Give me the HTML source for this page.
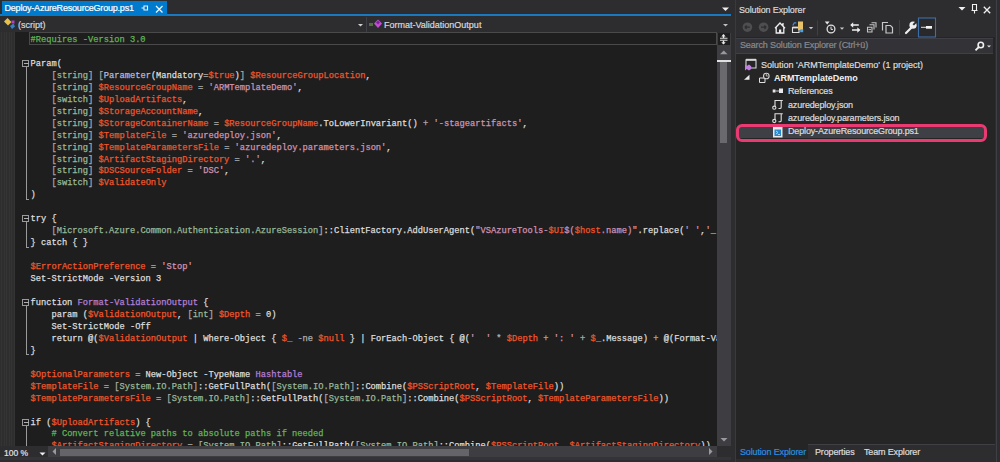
<!DOCTYPE html>
<html><head><meta charset="utf-8">
<style>
*{margin:0;padding:0;box-sizing:border-box}
html,body{width:1000px;height:462px;overflow:hidden;background:#2d2d30;font-family:"Liberation Sans",sans-serif}
.a{position:absolute}
svg{position:absolute;overflow:visible}
#tab{left:2px;top:1px;width:165px;height:15px;background:#007acc;color:#fff;font-size:9px;letter-spacing:-0.2px;-webkit-text-stroke:0.2px;line-height:15px;padding-left:2.5px;white-space:nowrap}
#blueline{left:0;top:14px;width:731px;height:2px;background:#1a78c0}
#nav{left:0;top:16px;width:731px;height:16px;background:#2d2d30}
#editor{left:0;top:32px;width:717px;height:414px;background:#1e1e1e;overflow:hidden}
#margin{left:0;top:0;width:15px;height:414px;background:repeating-linear-gradient(90deg,#2e2e2e 0,#2e2e2e 1.2px,#343434 1.2px,#343434 2.5px)}
pre{position:absolute;left:30.5px;top:3px;font-family:"Liberation Mono",monospace;font-size:8.72px;-webkit-text-stroke:0.25px;line-height:11.96px;color:#dcdcdc;white-space:pre}
.c{color:#60b455}.v{color:#f0552a}.s{color:#d092b2}.t{color:#98b898}.b{color:#a8a8a8}.f{color:#b47ed6}.o{color:#b0b0b0}.at{color:#b8b8d8}
#curline{left:29px;top:0px;width:688px;height:13px;border:1px solid #4a4a4a}
#vscroll{left:717px;top:33px;width:14px;height:413px;background:#3e3e42}
#hbar{left:0;top:446px;width:731px;height:16px;background:#2d2d30}
#se{left:736px;top:0;width:259px;height:462px;background:#252526}
.ui{font-size:9px;color:#d0d0d0;white-space:nowrap;line-height:11px;-webkit-text-stroke:0.2px}
.row{position:absolute;font-size:9px;color:#dcdcdc;white-space:nowrap;line-height:13.3px;letter-spacing:-0.15px;-webkit-text-stroke:0.2px}
.ol{position:absolute;left:22px;width:7px;height:7px;border:1px solid #9a9a9a}
.ol:after{content:"";position:absolute;left:1px;top:2px;width:5px;height:1px;background:#b0b0b0}
.vl{position:absolute;left:26px;width:1px;background:#9a9a9a}
.hl{position:absolute;left:26px;width:3px;height:1px;background:#9a9a9a}
</style></head><body>
<!-- top tab strip -->
<div id="nav" class="a"></div>
<div id="blueline" class="a"></div>
<div id="tab" class="a">Deploy-AzureResourceGroup.ps1</div>
<svg style="left:141px;top:4px" width="8" height="8" viewBox="0 0 8 8"><path d="M0.5 4h2.5M3 1.5v5M3 2h3.5v4H3" stroke="#e8f4ff" stroke-width="1.1" fill="none"/></svg>
<svg style="left:155px;top:4.5px" width="8" height="8" viewBox="0 0 8 8"><path d="M1 1l6.5 6.5M7.5 1L1 7.5" stroke="#e8f4ff" stroke-width="1.3"/></svg>
<svg style="left:721px;top:6px" width="9" height="6"><path d="M1 1.5h7L4.5 5z" fill="#f0f0f0"/></svg>

<!-- nav bar -->
<svg style="left:3px;top:17px" width="14" height="14" viewBox="0 0 14 14">
  <path d="M1 4.5L4.5 1L8.5 5L5 8.5z" fill="#e8c048"/>
  <path d="M8.5 3.5l3 0l0 3l-3 0z" fill="#b040c0"/>
  <path d="M7 9l3.5-2.5l1.5 3l-3 2.5z" fill="#3a80c0"/>
</svg>
<div class="a ui" style="left:18px;top:19.5px;color:#d8d8d8">(script)</div>
<svg style="left:357px;top:23px" width="8" height="5"><path d="M1 1h5L3.5 3.5z" fill="#d0d0d0"/></svg>
<div class="a" style="left:366px;top:17px;width:1px;height:15px;background:#3f3f46"></div>
<svg style="left:368px;top:17px" width="16" height="14" viewBox="0 0 16 14">
  <path d="M1 6h4v3H1z" fill="#507040"/>
  <path d="M6 6.5L10 2.5L14 6.5L10 11z" fill="#c050d0"/>
  <path d="M8 5.5L10 3.5L12 5.5L10 7.5z" fill="#8020a0"/>
</svg>
<div class="a ui" style="left:384px;top:19.5px;color:#d8d8d8">Format-ValidationOutput</div>
<svg style="left:722px;top:23px" width="8" height="5"><path d="M1 1h5L3.5 3.5z" fill="#c0c0c0"/></svg>

<!-- editor -->
<div id="editor" class="a">
<div id="margin" class="a"></div>
<div id="curline" class="a"></div>
<div class="ol" style="top:28px"></div><div class="vl" style="top:35px;height:132px"></div><div class="hl" style="top:167px"></div>
<div class="ol" style="top:183px"></div><div class="vl" style="top:190px;height:25px"></div><div class="hl" style="top:215px"></div>
<div class="ol" style="top:267px"></div><div class="vl" style="top:274px;height:48px"></div><div class="hl" style="top:322px"></div>
<div class="ol" style="top:387px"></div><div class="vl" style="top:394px;height:20px"></div>
<pre><span class="c">#Requires -Version 3.0</span>

Param(
    <span class="b">[</span><span class="t">string</span><span class="b">]</span> <span class="b">[</span><span class="at">Parameter</span>(Mandatory<span class="o">=</span><span class="v">$true</span>)<span class="b">]</span> <span class="v">$ResourceGroupLocation</span>,
    <span class="b">[</span><span class="t">string</span><span class="b">]</span> <span class="v">$ResourceGroupName</span> <span class="o">=</span> <span class="s">'ARMTemplateDemo'</span>,
    <span class="b">[</span><span class="t">switch</span><span class="b">]</span> <span class="v">$UploadArtifacts</span>,
    <span class="b">[</span><span class="t">string</span><span class="b">]</span> <span class="v">$StorageAccountName</span>,
    <span class="b">[</span><span class="t">string</span><span class="b">]</span> <span class="v">$StorageContainerName</span> <span class="o">=</span> <span class="v">$ResourceGroupName</span>.ToLowerInvariant() <span class="o">+</span> <span class="s">'-stageartifacts'</span>,
    <span class="b">[</span><span class="t">string</span><span class="b">]</span> <span class="v">$TemplateFile</span> <span class="o">=</span> <span class="s">'azuredeploy.json'</span>,
    <span class="b">[</span><span class="t">string</span><span class="b">]</span> <span class="v">$TemplateParametersFile</span> <span class="o">=</span> <span class="s">'azuredeploy.parameters.json'</span>,
    <span class="b">[</span><span class="t">string</span><span class="b">]</span> <span class="v">$ArtifactStagingDirectory</span> <span class="o">=</span> <span class="s">'.'</span>,
    <span class="b">[</span><span class="t">string</span><span class="b">]</span> <span class="v">$DSCSourceFolder</span> <span class="o">=</span> <span class="s">'DSC'</span>,
    <span class="b">[</span><span class="t">switch</span><span class="b">]</span> <span class="v">$ValidateOnly</span>
)

try {
    <span class="b">[</span><span class="t">Microsoft.Azure.Common.Authentication.AzureSession</span><span class="b">]</span>::ClientFactory.AddUserAgent(<span class="s">"VSAzureTools-</span><span class="v">$UI</span><span class="s">$(</span><span class="v">$host</span><span class="s">.name)"</span>.replace(<span class="s">' '</span>,<span class="s">'_'</span>), <span class="s">'1.0'</span>)
} catch { }

<span class="v">$ErrorActionPreference</span> <span class="o">=</span> <span class="s">'Stop'</span>
Set-StrictMode -Version 3

function <span class="f">Format-ValidationOutput</span> {
    param (<span class="v">$ValidationOutput</span>, <span class="b">[</span><span class="t">int</span><span class="b">]</span> <span class="v">$Depth</span> <span class="o">=</span> 0)
    Set-StrictMode -Off
    return @(<span class="v">$ValidationOutput</span> | Where-Object { <span class="v">$_</span> <span class="o">-ne</span> <span class="v">$null</span> } | ForEach-Object { @(<span class="s">'  '</span> <span class="o">*</span> <span class="v">$Depth</span> <span class="o">+</span> <span class="s">': '</span> <span class="o">+</span> <span class="v">$_</span>.Message) <span class="o">+</span> @(Format-ValidationOutput @(<span class="v">$_</span> | Select-Object -ExpandProperty Details) (<span class="v">$Depth</span> <span class="o">+</span> 1)) })
}

<span class="v">$OptionalParameters</span> <span class="o">=</span> New-Object -TypeName <span class="f">Hashtable</span>
<span class="v">$TemplateFile</span> <span class="o">=</span> <span class="b">[</span><span class="t">System.IO.Path</span><span class="b">]</span>::GetFullPath(<span class="b">[</span><span class="t">System.IO.Path</span><span class="b">]</span>::Combine(<span class="v">$PSScriptRoot</span>, <span class="v">$TemplateFile</span>))
<span class="v">$TemplateParametersFile</span> <span class="o">=</span> <span class="b">[</span><span class="t">System.IO.Path</span><span class="b">]</span>::GetFullPath(<span class="b">[</span><span class="t">System.IO.Path</span><span class="b">]</span>::Combine(<span class="v">$PSScriptRoot</span>, <span class="v">$TemplateParametersFile</span>))

if (<span class="v">$UploadArtifacts</span>) {
    <span class="c"># Convert relative paths to absolute paths if needed</span>
    <span class="v">$ArtifactStagingDirectory</span> <span class="o">=</span> <span class="b">[</span><span class="t">System.IO.Path</span><span class="b">]</span>::GetFullPath(<span class="b">[</span><span class="t">System.IO.Path</span><span class="b">]</span>::Combine(<span class="v">$PSScriptRoot</span>, <span class="v">$ArtifactStagingDirectory</span>))
</pre>
</div>

<!-- vertical scrollbar -->
<div id="vscroll" class="a">
  <div class="a" style="left:1px;top:0;width:12px;height:12px;background:#1e1e1e"></div>
  <svg style="left:0;top:0" width="14" height="30" viewBox="0 0 14 30">
    <path d="M6.5 1.5v3.5M6.5 7.5v3.5" stroke="#e8e8e8" stroke-width="1.4" fill="none"/>
    <path d="M4.3 3.5L6.5 1.2L8.7 3.5zM4.3 9.2L6.5 11.5L8.7 9.2z" fill="#e8e8e8"/>
    <path d="M3 5.3h7.5M3 7.3h7.5" stroke="#d8d8d8" stroke-width="1.1" fill="none"/>
    <path d="M3 21.3h7.5L6.8 17.5z" fill="#9a9a9e"/>
  </svg>
  <div class="a" style="left:0;top:27px;width:14px;height:1.5px;background:#e0e0e0"></div>
  <div class="a" style="left:3px;top:29px;width:7px;height:81px;background:#6a6a6e"></div>
  <svg style="left:0;top:400px" width="14" height="13"><path d="M3.5 5h7L7 8.5z" fill="#9a9a9e"/></svg>
</div>

<!-- bottom bar -->
<div id="hbar" class="a">
  <div class="a ui" style="left:4px;top:2px;color:#e0e0e0;font-size:8.5px">100 %</div>
  <svg style="left:38px;top:4px" width="10" height="8"><path d="M1.5 2.5h6L4.5 5.5z" fill="#f0f0f0"/></svg>
  <div class="a" style="left:48px;top:0;width:669px;height:10.5px;background:#3e3e42"></div>
  <svg style="left:48px;top:0" width="12" height="12"><path d="M8 2v7L4.5 5.5z" fill="#9a9a9e"/></svg>
  <div class="a" style="left:60px;top:2.8px;width:409px;height:6.8px;background:#656569"></div>
  <svg style="left:705px;top:0" width="12" height="12"><path d="M4 2v7l3.5-3.5z" fill="#9a9a9e"/></svg>
  <div class="a" style="left:0;top:10.5px;width:731px;height:3.5px;background:#343438"></div>
</div>

<!-- solution explorer -->
<div id="se" class="a">
  <div class="a" style="left:0;top:0;width:259px;height:17px;background:#2d2d30"></div>
  <div class="a ui" style="left:3px;top:4.7px;color:#d8d8d8;letter-spacing:-0.13px">Solution Explorer</div>
  <svg style="left:222px;top:6px" width="8" height="5"><path d="M0.5 1h7L4 4.5z" fill="#f0f0f0"/></svg>
  <svg style="left:235px;top:4px" width="7" height="10" viewBox="0 0 7 10"><path d="M1.5 0.5h4v6h-4zM0.5 6.5h6M3.5 6.5v3" stroke="#f0f0f0" stroke-width="1.1" fill="none"/></svg>
  <svg style="left:247px;top:5.5px" width="8" height="8"><path d="M0.8 0.8l6.4 6.4M7.2 0.8L0.8 7.2" stroke="#f0f0f0" stroke-width="1.3"/></svg>
  <!-- toolbar -->
  <div class="a" style="left:0;top:17px;width:259px;height:20px;background:#2d2d30"></div>
  <svg style="left:0;top:17px" width="259" height="20" viewBox="0 0 259 20">
    <g fill="#4e4e50"><circle cx="11.4" cy="10.2" r="4.8"/><circle cx="27.6" cy="10.2" r="4.8"/></g>
    <path d="M8.8 10.2h5M8.8 10.2l1.8-1.7M8.8 10.2l1.8 1.7M25 10.2h5M30.2 10.2l-1.8-1.7M30.2 10.2l-1.8 1.7" stroke="#2d2d30" stroke-width="1.2" fill="none"/>
    <path d="M39 11.2L44 6L49 11.2M40.2 10.5V16H47.8V10.5M47 6v3" stroke="#eeeeee" stroke-width="1.3" fill="none"/>
    <path d="M43 12.5h2.2V16H43z" fill="#eeeeee"/>
    <path d="M56.5 10.5h6.5v5h-6.5z" stroke="#e0e0e0" stroke-width="1.1" fill="none"/>
    <path d="M56.5 10.5h6.5" stroke="#e0e0e0" stroke-width="1.8"/>
    <path d="M56.8 8.5L58.3 5.8h2" stroke="#4a90d8" stroke-width="1.2" fill="none"/>
    <path d="M62 4.5h5v8.5h-5z" fill="#e8c26a"/>
    <path d="M64.2 12.2h3v3h-3z" fill="#4aa4e8"/>
    <path d="M72.8 10h4.4l-2.2 2.2z" fill="#c8c8c8"/>
    <path d="M81.5 3.5v15" stroke="#3f3f46" stroke-width="1"/>
    <path d="M88.8 4.6h4.8l-2.4 2.8z" fill="#e8e8e8"/>
    <circle cx="95" cy="12" r="3.9" stroke="#e0e0e0" stroke-width="1.3" fill="none"/>
    <path d="M95 9.6v2.8h2" stroke="#e0e0e0" stroke-width="1" fill="none"/>
    <path d="M103.8 10.5h4.4l-2.2 2.2z" fill="#c8c8c8"/>
    <path d="M115 8h7.8M116 13h7.5" stroke="#eeeeee" stroke-width="1.5"/>
    <path d="M114.2 8l3-2.8v5.6zM124.3 13l-3-2.8v5.6z" fill="#eeeeee"/>
    <g stroke="#c4c4c4" stroke-width="1.1" fill="none">
      <path d="M135.5 5.8h4.5v4.6M133.5 7.8h4.5v4.6"/>
      <path d="M131.5 10.2h4.5v4.8h-4.5z"/>
    </g>
    <path d="M132.5 12.6h2.5" stroke="#c4c4c4" stroke-width="1"/>
    <g stroke="#c8c8c8" stroke-width="1.2" fill="none">
      <path d="M146.5 13.5V5.5h5.5"/>
      <path d="M150 8.5h4.5l2 2v5.5h-6.5z"/>
    </g>
    <path d="M163.5 3v15" stroke="#3f3f46" stroke-width="1"/>
    <path d="M170 16l5.5-5.5" stroke="#eeeeee" stroke-width="2.2" stroke-linecap="round"/>
    <circle cx="177" cy="8.2" r="3.6" fill="#eeeeee"/>
    <path d="M177.3 7.9l3.5-3.5" stroke="#2d2d30" stroke-width="2"/>
    <rect x="182.5" y="1" width="17" height="19" stroke="#3d6ea8" stroke-width="1.1" fill="#29292c"/>
    <path d="M185 10.3h5" stroke="#e0e0e0" stroke-width="1"/>
    <path d="M190 9h6v2.7h-6z" fill="#f4f4f4"/>
  </svg>
  <!-- search -->
  <div class="a" style="left:0;top:38px;width:257px;height:16px;background:#333337;border-top:1px solid #3f3f46;border-bottom:1px solid #3f3f46"></div>
  <div class="a ui" style="left:4px;top:40px;color:#8a8a8a;letter-spacing:-0.13px">Search Solution Explorer (Ctrl+&uuml;)</div>
  <svg style="left:236px;top:40px" width="20" height="13" viewBox="0 0 20 13">
    <circle cx="8.8" cy="5" r="2.7" stroke="#f0f0f0" stroke-width="1.6" fill="none"/>
    <path d="M6.8 7l-3.3 3.3" stroke="#f0f0f0" stroke-width="1.8"/>
    <path d="M15 5.5h4l-2 2z" fill="#e0e0e0"/>
  </svg>
  <!-- tree -->
  <svg style="left:0;top:55px" width="259" height="90" viewBox="0 0 259 90">
    <path d="M10 4.8h10v8.2h-10z" stroke="#d8d8d8" stroke-width="1.1" fill="none"/>
    <path d="M10 4.8h10" stroke="#d8d8d8" stroke-width="2"/>
    <path d="M9 9.5l1.8 1.6l2.2-1.6l2.2 1.8v2.6l-2.2 1.6l-2.2-1.6l-1.8 1.6z" fill="#c080e0"/>
    <path d="M8 24.8l5.5-5v5z" fill="#eaeaea"/>
    <path d="M23.5 23h5.5v4.5h-5.5z" stroke="#e0e0e0" stroke-width="1" fill="none"/>
    <circle cx="30.3" cy="21" r="2.8" stroke="#d0d0d0" stroke-width="1.1" fill="#252526"/>
    <path d="M30.3 19v2h1.5" stroke="#d0d0d0" stroke-width="0.8" fill="none"/>
    <path d="M36.7 34.5h2.8v3h-2.8zM43 33.5h4v4.5h-4z" fill="#e8e8e8"/>
    <path d="M39.5 36h3.5" stroke="#c8c8c8" stroke-width="1"/>
    <g stroke="#e0e0e0" stroke-width="1.1" fill="none">
      <path d="M39 51V45.5H46.8M45.2 45.5V52.2Q45.2 53.5 43.8 53.5H42.5"/><circle cx="38.3" cy="52.7" r="1.6"/>
      <path d="M39 64.3V58.8H46.8M45.2 58.8V65.5Q45.2 66.8 43.8 66.8H42.5"/><circle cx="38.3" cy="66" r="1.6"/>
    </g>
  </svg>
  <div class="row" style="left:25px;top:58.7px;letter-spacing:0">Solution 'ARMTemplateDemo' (1 project)</div>
  <div class="row" style="left:38px;top:72px;font-weight:bold;color:#f0f0f0;letter-spacing:-0.05px;-webkit-text-stroke:0">ARMTemplateDemo</div>
  <div class="row" style="left:52px;top:85.4px">References</div>
  <div class="row" style="left:52px;top:98.7px">azuredeploy.json</div>
  <div class="row" style="left:52px;top:112px">azuredeploy.parameters.json</div>
  <div class="a" style="left:3px;top:127px;width:247px;height:11px;background:#3f3f46"></div>
  <svg style="left:36px;top:126px" width="12" height="12" viewBox="0 0 12 12">
    <path d="M1 1h9.5v10.5H1z" fill="#e8e8e8"/>
    <path d="M2.5 3.5h6.5v6.5h-6.5z" fill="#2a8ad0"/>
    <path d="M4 5l2 1.5l-2 1.5M6 8.5h2" stroke="#cfe8ff" stroke-width="0.8" fill="none"/>
  </svg>
  <div class="row" style="left:52px;top:125.3px">Deploy-AzureResourceGroup.ps1</div>
  <div class="a" style="left:0.3px;top:123.5px;width:251.2px;height:18.6px;border:3px solid #ea3a72;border-radius:6px"></div>
  <!-- bottom tabs -->
  <div class="a" style="left:72px;top:444px;width:187px;height:18px;background:#2d2d30;border-top:1px solid #3f3f46"></div>
  <div class="a" style="left:0;top:459px;width:72px;height:3px;background:#2d2d30"></div>
  <div class="row" style="left:4px;top:446px;color:#2a8ee0">Solution Explorer</div>
  <div class="row" style="left:79px;top:446px">Properties</div>
  <div class="row" style="left:128px;top:446px">Team Explorer</div>
</div>
<div class="a" style="left:735px;top:0;width:1px;height:462px;background:#3a3a3e"></div>
<div class="a" style="left:995px;top:0;width:5px;height:462px;background:#2d2d30"></div>
<div class="a" style="left:996px;top:0;width:1px;height:462px;background:#3f3f46"></div>
</body></html>
